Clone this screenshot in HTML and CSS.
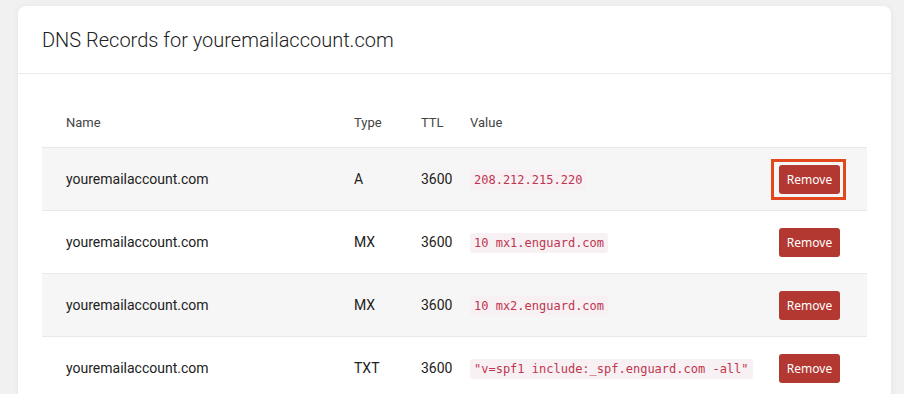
FILE: index.html
```html
<!DOCTYPE html>
<html lang="en">
<head>
    <meta charset="UTF-8">
    <meta name="viewport" content="width=device-width, initial-scale=1.0">
    <title>DNS Records</title>
    <link rel="stylesheet" href="styles.css">
</head>
<body>
    <!-- DNS records card -->
    <div class="card">
        <div class="card-header">
            <h2>DNS Records for youremailaccount.com</h2>
        </div>
        <div class="card-body">
            <table class="records">
                <colgroup>
                    <col class="col-name">
                    <col class="col-type">
                    <col class="col-ttl">
                    <col class="col-value">
                    <col class="col-action">
                </colgroup>
                <thead>
                    <tr>
                        <th>Name</th>
                        <th>Type</th>
                        <th>TTL</th>
                        <th>Value</th>
                        <th></th>
                    </tr>
                </thead>
                <tbody>
                    <tr class="striped">
                        <td>youremailaccount.com</td>
                        <td>A</td>
                        <td>3600</td>
                        <td><code>208.212.215.220</code></td>
                        <td class="action"><button class="remove-btn focused">Remove</button></td>
                    </tr>
                    <tr>
                        <td>youremailaccount.com</td>
                        <td>MX</td>
                        <td>3600</td>
                        <td><code>10 mx1.enguard.com</code></td>
                        <td class="action"><button class="remove-btn">Remove</button></td>
                    </tr>
                    <tr class="striped">
                        <td>youremailaccount.com</td>
                        <td>MX</td>
                        <td>3600</td>
                        <td><code>10 mx2.enguard.com</code></td>
                        <td class="action"><button class="remove-btn">Remove</button></td>
                    </tr>
                    <tr>
                        <td>youremailaccount.com</td>
                        <td>TXT</td>
                        <td>3600</td>
                        <td><code>"v=spf1 include:_spf.enguard.com -all"</code></td>
                        <td class="action"><button class="remove-btn">Remove</button></td>
                    </tr>
                </tbody>
            </table>
        </div>
    </div>
</body>
</html>
```

FILE: styles.css
```css
body {
    font-family: Roboto, "Liberation Sans", sans-serif;
    background-color: #f1f1f1;
    margin: 0;
    padding: 6px 13px 0 18px;
    color: #222;
}
.card {
    background-color: white;
    border-radius: 8px;
    box-shadow: 0 1px 6px rgba(0, 0, 0, 0.06);
    height: 420px;
}
.card-header {
    padding: 22px 24px 20px;
    border-bottom: 1px solid #ebebeb;
}
.card-header h2 {
    margin: 0;
    font-size: 20px;
    line-height: 25px;
    font-weight: 300;
    color: #222;
}
.card-body {
    padding: 24px 24px 0;
}
.records {
    width: 100%;
    border-collapse: collapse;
    table-layout: fixed;
}
.col-name {
    width: 312px;
}
.col-type {
    width: 67px;
}
.col-ttl {
    width: 49px;
}
.col-action {
    width: 88px;
}
.records th {
    height: 49px;
    padding: 0;
    text-align: left;
    font-size: 13px;
    font-weight: 400;
    color: #444;
}
.records td {
    height: 62px;
    padding: 0;
    font-size: 14px;
    border-top: 1px solid #e9e9e9;
    vertical-align: middle;
}
.records th:first-child,
.records td:first-child {
    padding-left: 24px;
}
.records tr.striped td {
    background-color: #f6f6f6;
}
code {
    font-family: "DejaVu Sans Mono", monospace;
    font-size: 12px;
    color: #c0344f;
    background-color: #f8f1f3;
    padding: 3px 4px;
    border-radius: 3px;
}
.records td.action {
    padding-right: 27px;
}
.remove-btn {
    position: relative;
    display: block;
    margin-left: auto;
    width: 61px;
    height: 29px;
    padding: 0;
    font-family: "Noto Sans", sans-serif;
    font-size: 12px;
    color: white;
    background-color: #b23831;
    border: none;
    border-radius: 3px;
    cursor: pointer;
}
.remove-btn.focused::after {
    content: "";
    position: absolute;
    top: -6px;
    bottom: -6px;
    left: -8px;
    right: -6px;
    border: 3px solid #e2481c;
}
```
